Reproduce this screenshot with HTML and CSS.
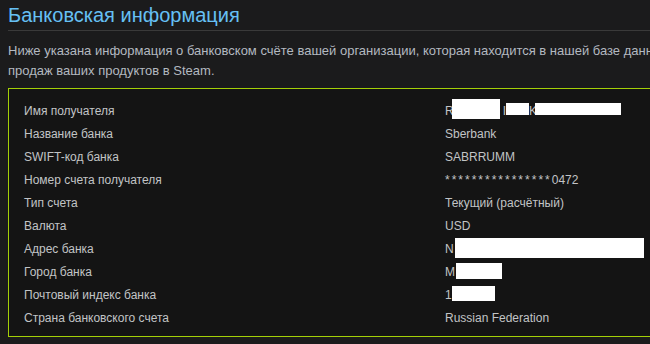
FILE: index.html
```html
<!DOCTYPE html>
<html lang="ru">
<head>
<meta charset="utf-8">
<title>Банковская информация</title>
<link rel="stylesheet" href="styles.css">
</head>
<body>
<main class="page">
  <h1 class="title">Банковская информация</h1>
  <p class="intro">Ниже указана информация о банковском счёте вашей организации, которая находится в нашей базе данных для выплат с<br>продаж ваших продуктов в Steam.</p>
  <section class="bank">
    <div class="row"><span class="label">Имя получателя</span><span class="value">R<span class="mask m1"></span>I<span class="mask m2"></span>K<span class="mask m3"></span></span></div>
    <div class="row"><span class="label">Название банка</span><span class="value">Sberbank</span></div>
    <div class="row"><span class="label">SWIFT-код банка</span><span class="value">SABRRUMM</span></div>
    <div class="row"><span class="label">Номер счета получателя</span><span class="value"><span class="stars">****************</span>0472</span></div>
    <div class="row"><span class="label">Тип счета</span><span class="value">Текущий (расчётный)</span></div>
    <div class="row"><span class="label">Валюта</span><span class="value">USD</span></div>
    <div class="row"><span class="label">Адрес банка</span><span class="value">N<span class="mask m4"></span></span></div>
    <div class="row"><span class="label">Город банка</span><span class="value">M<span class="mask m5"></span></span></div>
    <div class="row"><span class="label">Почтовый индекс банка</span><span class="value">1<span class="mask m6"></span></span></div>
    <div class="row"><span class="label">Страна банковского счета</span><span class="value">Russian Federation</span></div>
  </section>
</main>
</body>
</html>
```

FILE: styles.css
```css
html, body {
  margin: 0;
  padding: 0;
  background: #1b1b1c;
  overflow: hidden;
}

.page {
  width: 760px;
  padding: 0 0 0 8px;
  font-family: "Liberation Sans", Arial, sans-serif;
}

.title {
  margin: 0;
  height: 31px;
  line-height: 30px;
  font-size: 20px;
  font-weight: normal;
  color: #66c0f4;
  border-bottom: 1px solid #3a3a3a;
  box-sizing: border-box;
}

.intro {
  margin: 0;
  padding: 10px 0 0 0;
  height: 57px;
  box-sizing: border-box;
  font-size: 13px;
  line-height: 20px;
  color: #b3b9c0;
  white-space: nowrap;
}

.bank {
  border: 1px solid #a4d007;
  border-right: none;
  background: #141414;
  padding: 11px 0 6px 15px;
}

.row {
  display: flex;
  height: 23px;
  line-height: 23px;
  font-size: 12px;
  color: #c2c4c6;
}

.label {
  width: 421px;
  flex: none;
}

.value {
  display: flex;
  align-items: flex-start;
}

.stars {
  letter-spacing: 2px;
}

.mask {
  display: inline-block;
  background: #ffffff;
}

.m1 { width: 48px; height: 20px; margin: -1px 3px 0 -2px; }
.m2 { width: 23px; height: 12px; margin: 3px 0 0 0; }
.m3 { width: 86px; height: 12px; margin: 3px 0 0 -2px; }
.m4 { width: 189px; height: 20px; margin: 0 0 0 1px; }
.m5 { width: 46px; height: 16px; margin: 2px 0 0 1px; }
.m6 { width: 43px; height: 15px; margin: 2px 0 0 0; }
```
